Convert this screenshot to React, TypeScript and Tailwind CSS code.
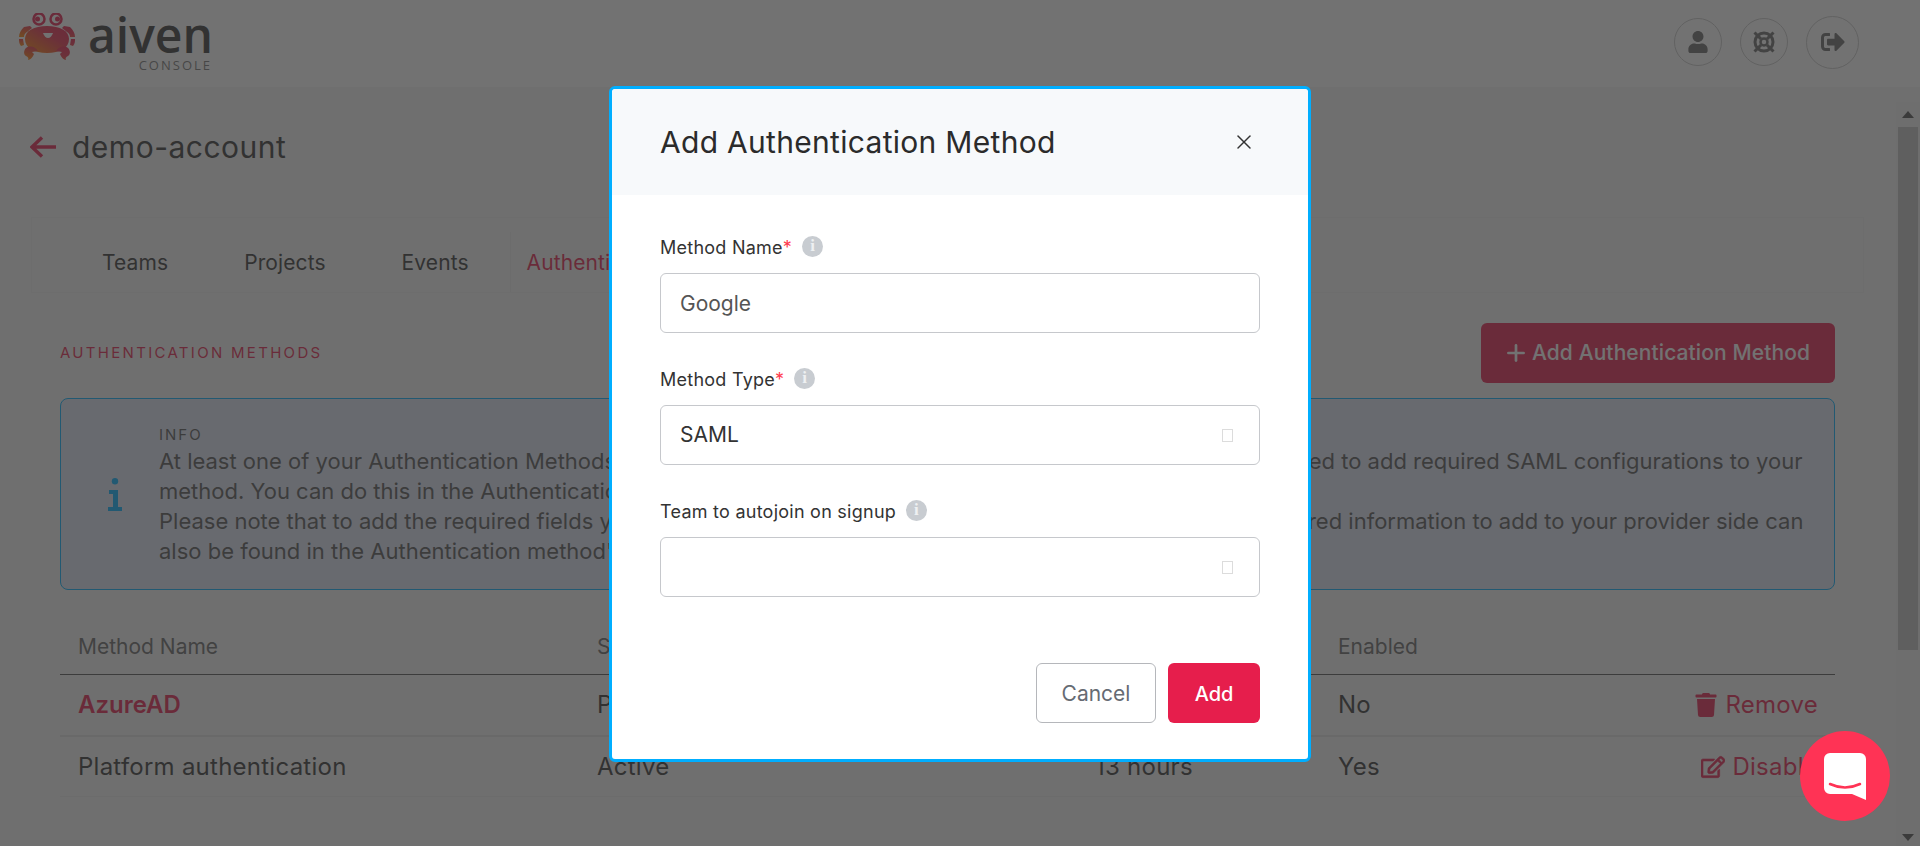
import { Plus, X } from "lucide-react";
import { FaRegEdit, FaSignOutAlt, FaTrash, FaUser } from "react-icons/fa";

function Crab() {
	return (
		<svg width="58" height="47" viewBox="0 0 58 47" fill="none">
			<defs>
				<linearGradient id="crab" x1="0" y1="1" x2="1" y2="0">
					<stop offset="0" stopColor="#ff8a00" />
					<stop offset="0.6" stopColor="#e8304c" />
					<stop offset="1" stopColor="#e61e4c" />
				</linearGradient>
			</defs>
			<g fill="url(#crab)">
				<path d="M7 26c0-8 9-13 22-13s22 5 22 13c0 9-9 14-22 14S7 35 7 26z" />
				<path d="M6 14l6-1 2 2-5 4c-2 1-3 3-3 5H1c0-4 2-7 5-10zM52 14l-6-1-2 2 5 4c2 1 3 3 3 5h5c0-4-2-7-5-10z" />
				<path d="M1 26h4l1 6-3 1c-2-2-2-5-2-7zM57 26h-4l-1 6 3 1c2-2 2-5 2-7z" />
				<path d="M8 35c4-3 10-1 12 3l-6 1 2 2c-1 3-4 6-6 6 1-2 0-3-2-4-3-2-2-6 0-8zM50 35c-4-3-10-1-12 3l6 1-2 2c1 3 4 6 6 6-1-2 0-3 2-4 3-2 2-6 0-8z" />
			</g>
			<path d="M25 20h10c-1 3-3 5-5 5s-4-2-5-5z" fill="#fff" />
			<circle cx="21" cy="6" r="5.5" stroke="#e61e4c" strokeWidth="2.5" fill="#fff" />
			<circle cx="38" cy="6" r="5.5" stroke="#e61e4c" strokeWidth="2.5" fill="#fff" />
			<circle cx="19.5" cy="6" r="2.5" fill="#e61e4c" />
			<circle cx="39.5" cy="6" r="2.5" fill="#e61e4c" />
		</svg>
	);
}

function LifeRing() {
	return (
		<svg width="24" height="24" viewBox="0 0 24 24" fill="none" stroke="currentColor">
			<circle cx="12" cy="12" r="9" strokeWidth="3" />
			<circle cx="12" cy="12" r="3.5" strokeWidth="2.5" />
			<path d="M2.5 2.5l6.5 6.5M21.5 2.5L15 9M2.5 21.5L9 15M21.5 21.5L15 15" strokeWidth="3" />
		</svg>
	);
}

function HeaderButton({ big, children }: { big?: boolean; children: React.ReactNode }) {
	return (
		<div
			className={`flex items-center justify-center rounded-full border border-[#c9c9c9] text-[#6b6b6b] ${big ? "h-[53px] w-[53px]" : "h-[48px] w-[48px]"}`}
		>
			{children}
		</div>
	);
}

function InfoDot() {
	return (
		<span className="mb-[2px] flex h-[21px] w-[21px] items-center justify-center rounded-full bg-[#c8ccd1] font-['Liberation_Serif',serif] text-[17px] font-bold text-[#eef0f2]">
			i
		</span>
	);
}

function FieldLabel({ text, required }: { text: string; required?: boolean }) {
	return (
		<div className="mb-[13px] flex h-[26px] items-center gap-[10px] text-[18px] tracking-[0.25px] text-[#333]">
			<span>
				{text}
				{required && <span className="text-[#ff3b4e]">*</span>}
			</span>
			<InfoDot />
		</div>
	);
}

function SelectBox({ value }: { value?: string }) {
	return (
		<div className="flex h-[60px] items-center justify-between rounded-[6px] border border-[#c6c8cc] pl-[19px] pr-[26px] text-[21px] text-[#333]">
			<span>{value}</span>
			<span className="h-[13px] w-[11px] border border-[#dcdcdc]" />
		</div>
	);
}

function Scrollbar() {
	return (
		<div className="mt-[15px] flex w-[24px] flex-col bg-[#f1f1f1] px-[2px]">
			<div className="flex h-[25px] items-center justify-center">
				<svg width="12" height="7" viewBox="0 0 12 7">
					<path d="M6 0l6 7H0z" fill="#505050" />
				</svg>
			</div>
			<div className="h-[523px] bg-[#c1c1c1]" />
			<div className="flex flex-1 items-end justify-center pb-[5px]">
				<svg width="12" height="7" viewBox="0 0 12 7">
					<path d="M6 7L0 0h12z" fill="#505050" />
				</svg>
			</div>
		</div>
	);
}

const rowGrid = "grid grid-cols-[519px_498px_243px_1fr_auto] items-center pl-[18px] pr-[17px]";

export default function App() {
	return (
		<div className="relative h-screen w-screen overflow-hidden bg-white font-['Inter',sans-serif] text-[#333]">
			<header className="flex h-[87px] items-center justify-between bg-white pb-[3px] pl-[18px] pr-[61px]">
				<div className="flex items-start">
					<div className="mt-[1px]">
						<Crab />
					</div>
					<div className="ml-[12px] flex flex-col items-end">
						<span className="font-['Open_Sans',sans-serif] text-[48px] font-semibold leading-[46px] text-[#333]">aiven</span>
						<span className="mr-[1px] font-['Open_Sans',sans-serif] text-[13px] leading-[14px] tracking-[2px] text-[#777]">CONSOLE</span>
					</div>
				</div>
				<div className="flex items-center gap-[18px]">
					<HeaderButton>
						<FaUser size={22} />
					</HeaderButton>
					<HeaderButton>
						<LifeRing />
					</HeaderButton>
					<HeaderButton big>
						<FaSignOutAlt size={24} />
					</HeaderButton>
				</div>
			</header>

			<div className="flex h-[759px] bg-[#f6f6f6]">
				<main className="min-w-0 flex-1 pl-[31px] pr-[32px]">
					<div className="h-[130px] pt-[45px]">
						<div className="flex h-[30px] items-center">
							<svg width="26" height="22" viewBox="0 0 26 22" fill="none" className="-ml-[1px]">
								<path d="M12 1.5L2 11l10 9.5M2 11h24" stroke="#e61e4c" strokeWidth="3.4" />
							</svg>
							<h1 className="ml-[16px] text-[30px] leading-[30px] tracking-[0.5px]">demo-account</h1>
						</div>
					</div>

					<div className="flex h-[76px] items-end border border-[#f0f0f0] pl-[70px] text-[21px] leading-[58px] tracking-[0.1px]">
						<span>Teams</span>
						<span className="ml-[76px]">Projects</span>
						<span className="ml-[76px]">Events</span>
						<span className="ml-[41px] border-l border-[#ebebeb] pl-[16px] pt-[2px] text-[#e61e4c]">Authentication</span>
					</div>

					<div className="px-[29px]">
						<div className="mt-[30px] flex h-[60px] items-center justify-between">
							<h2 className="text-[15px] uppercase tracking-[2.3px] text-[#e61e4c]">Authentication Methods</h2>
							<button className="flex h-[60px] w-[354px] items-center justify-center gap-[3px] rounded-[6px] bg-[#e61e4c] pr-[3px] text-[21px] font-medium tracking-[0.1px] text-white">
								<Plus size={26} strokeWidth={2.5} />
								Add Authentication Method
							</button>
						</div>

						<div className="mt-[15px] flex h-[192px] rounded-[8px] border border-[#00b0ff] bg-[#e0e6f6]">
							<div className="flex w-[98px] shrink-0 items-center justify-center pl-[9px]">
								<svg width="14" height="33" viewBox="0 0 14 33" fill="#00b0ff">
									<circle cx="7" cy="3.2" r="3.2" />
									<path d="M1 12h9v17h4v4H0v-4h5V16H1z" />
								</svg>
							</div>
							<div className="whitespace-nowrap pt-[25px] text-[22px] leading-[30px] text-[#555]">
								<div className="h-[22px] text-[15px] leading-[22px] tracking-[2px]">INFO</div>
								<div>At least one of your Authentication Methods is currently in a pending configuration state, and you will be required to add required SAML configurations to your</div>
								<div>method. You can do this in the Authentication method's page by selecting it from the list below.</div>
								<div>Please note that to add the required fields you have to get these from your identity provider account. The required information to add to your provider side can</div>
								<div>also be found in the Authentication method's page.</div>
							</div>
						</div>

						<div className={`${rowGrid} mt-[29px] h-[56px] border-b border-[#555] text-[21px] text-[#666]`}>
							<span>Method Name</span>
							<span>Status</span>
							<span>Expires</span>
							<span>Enabled</span>
							<span />
						</div>
						<div className={`${rowGrid} h-[62px] border-b-2 border-[#e2e2e2] text-[24px] tracking-[0.25px]`}>
							<span className="font-semibold tracking-normal text-[#e61e4c]">AzureAD</span>
							<span>Pending Configuration</span>
							<span />
							<span>No</span>
							<span className="flex items-center gap-[7px] text-[#e61e4c]">
								<FaTrash size={24} />
								Remove
							</span>
						</div>
						<div className={`${rowGrid} h-[60px] border-b border-[#ececec] text-[24px] tracking-[0.25px]`}>
							<span>Platform authentication</span>
							<span>Active</span>
							<span>13 hours</span>
							<span>Yes</span>
							<span className="flex items-center gap-[7px] text-[#e61e4c]">
								<FaRegEdit size={24} stroke="currentColor" strokeWidth={14} />
								Disable
							</span>
						</div>
					</div>
				</main>
				<Scrollbar />
			</div>

			{/* overlay + modal */}
			<div className="absolute inset-0 flex items-start justify-center bg-[#323232]/[0.685] pt-[86px]">
				<div className="w-[702px] rounded-[6px] border-[3px] border-[#00aeff] bg-white">
					<div className="flex h-[106px] items-center justify-between rounded-t-[4px] bg-[#f7f9fb] pl-[48px] pr-[52px]">
						<h3 className="text-[30px] tracking-[0.3px] text-[#2b2b2b]">Add Authentication Method</h3>
						<X size={24} strokeWidth={1.5} className="text-[#333]" />
					</div>
					<div className="px-[48px] pb-[36px] pt-[39px]">
						<FieldLabel text="Method Name" required />
						<input
							readOnly
							value="Google"
							className="mb-[33px] block h-[60px] w-full rounded-[6px] border border-[#c6c8cc] px-[19px] text-[21px] text-[#555] outline-none"
						/>
						<FieldLabel text="Method Type" required />
						<div className="mb-[33px]">
							<SelectBox value="SAML" />
						</div>
						<FieldLabel text="Team to autojoin on signup" />
						<SelectBox />
						<div className="mt-[66px] flex justify-end gap-[12px]">
							<button className="h-[60px] w-[120px] rounded-[6px] border border-[#b5b7bb] bg-white pt-[1px] text-[21px] text-[#666b73]">Cancel</button>
							<button className="h-[60px] w-[92px] rounded-[6px] bg-[#e61e4c] pt-[1px] text-[20px] font-medium text-white">Add</button>
						</div>
					</div>
				</div>
			</div>

			<div className="absolute bottom-[25px] right-[30px] flex h-[90px] w-[90px] items-center justify-center rounded-full bg-[#ff3355]">
				<svg width="42" height="47" viewBox="0 0 42 47">
					<path d="M6 0h30a6 6 0 0 1 6 6v41l-14-6H6a6 6 0 0 1-6-6V6a6 6 0 0 1 6-6z" fill="#fff" />
					<path d="M6 31q15 7 30 0" fill="none" stroke="#ff3355" strokeWidth="2.5" strokeLinecap="round" />
				</svg>
			</div>
		</div>
	);
}
